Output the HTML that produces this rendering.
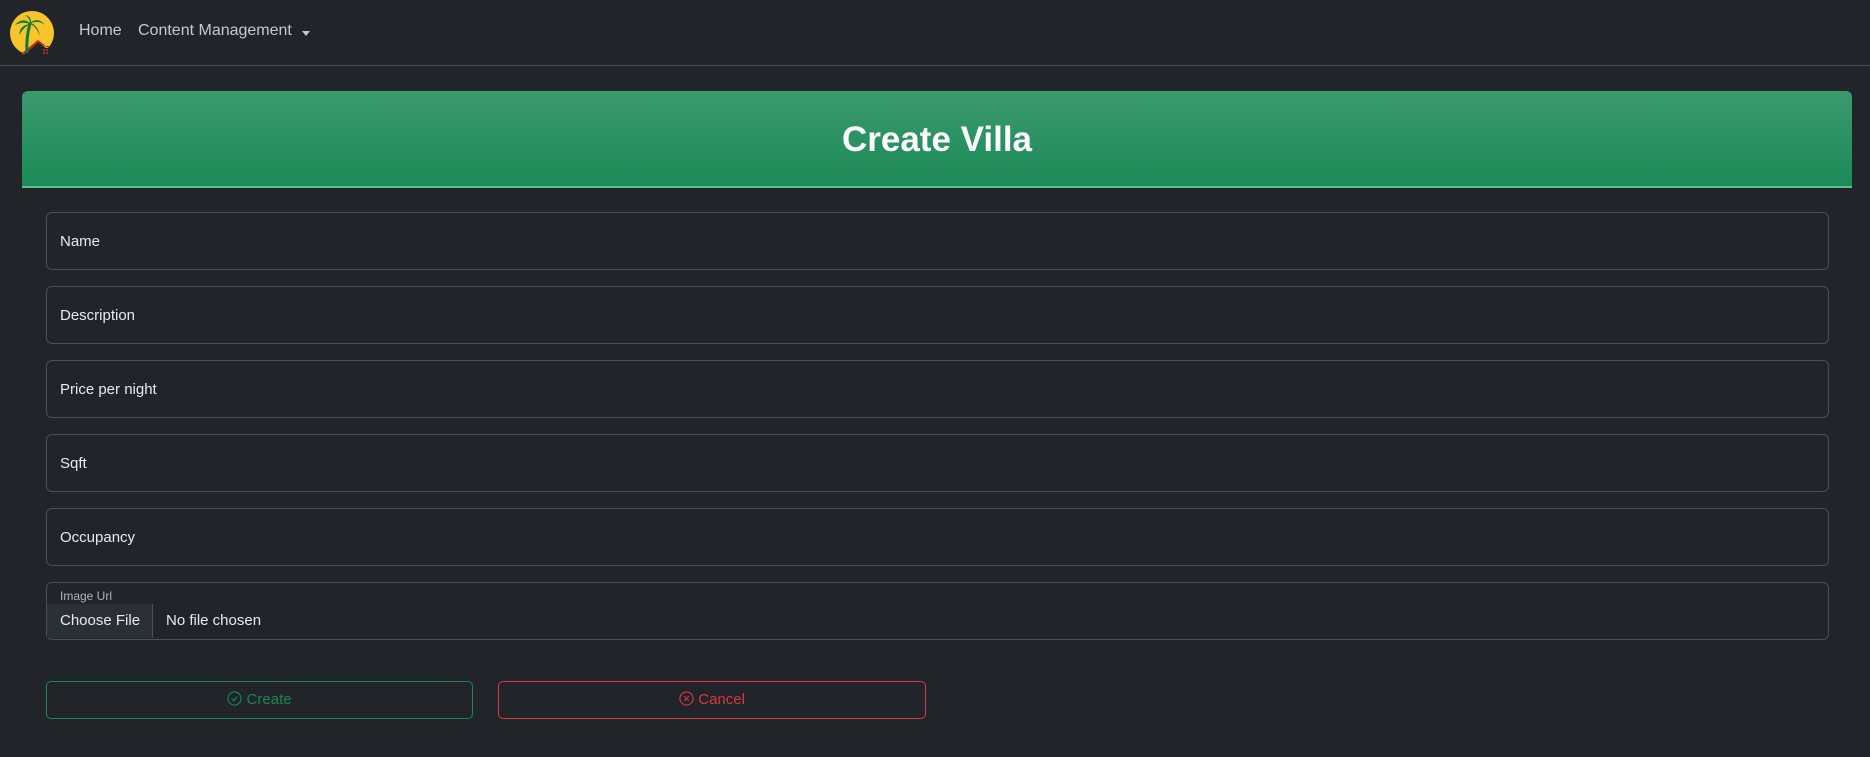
<!DOCTYPE html>
<html><head><meta charset="utf-8"><style>
*{box-sizing:border-box;margin:0;padding:0}
body{width:1870px;height:757px;background:#212529;font-family:"Liberation Sans",sans-serif;color:#dee2e6;position:relative;overflow:hidden}
.nav{position:absolute;left:0;top:0;width:1870px;height:66px;border-bottom:1px solid #495057}
.nav a{position:absolute;top:22px;font-size:16px;color:#c6c9cc}
.hdr{position:absolute;left:22px;top:91px;width:1830px;height:97px;border-radius:6px 6px 0 0;background:linear-gradient(#3a9a6d,#1d8a58);border-bottom:2px solid #5cc08e;text-align:center;color:#fff;font-weight:bold;font-size:35px;line-height:98px}
.inp{position:absolute;left:46px;width:1783px;height:58px;border:1px solid #495057;border-radius:6px;font-size:15px;color:#e8eaec;padding-left:13px;line-height:58px}
.btn{position:absolute;top:681px;height:38px;border-radius:5px;font-size:15px;line-height:36px;text-align:center}
</style></head><body>
<div class="nav">
<svg style="position:absolute;left:9px;top:10px" width="46" height="46" viewBox="0 0 46 46">
<circle cx="23" cy="23" r="22" fill="#f7c52b"/>
<path d="M10 46 L29 32 L37 38 L46 38 L46 46Z" fill="#212529"/>
<path d="M12 44 L29 30 L37 36 L40 36 L40 38 L29 33 L15 45Z" fill="#b22a1e"/>
<path d="M18 43 Q17 28 21 13" stroke="#0f7a33" stroke-width="3" fill="none"/>
<path d="M21 13 Q13 7 6 15 Q14 11 21 14 Q11 15 10 25 Q15 17 21 14 Q27 16 31 26 Q29 16 22 13 Q30 10 36 15 Q30 7 22 12 Q22 6 16 5 Q21 8 21 13Z" fill="#0f7a33"/>
<rect x="34" y="39" width="2" height="2" fill="#b22a1e"/><rect x="37" y="39" width="2" height="2" fill="#b22a1e"/><rect x="34" y="42" width="2" height="2" fill="#b22a1e"/><rect x="37" y="42" width="2" height="2" fill="#b22a1e"/>
</svg>
<a style="left:79px">Home</a>
<a style="left:138px">Content Management</a>
<span style="position:absolute;left:302px;top:31px;border-left:4px solid transparent;border-right:4px solid transparent;border-top:5px solid #c6c9cc"></span>
</div>
<div class="hdr">Create Villa</div>
<div class="inp" style="top:212px">Name</div>
<div class="inp" style="top:286px">Description</div>
<div class="inp" style="top:360px">Price per night</div>
<div class="inp" style="top:434px">Sqft</div>
<div class="inp" style="top:508px">Occupancy</div>
<div class="inp" style="top:582px;padding:0">
<div style="position:absolute;left:13px;top:6px;font-size:12px;line-height:14px;color:#adb5bd">Image Url</div>
<div style="position:absolute;left:0;top:21px;width:106px;height:34px;background:#2b3035;border-right:1px solid #495057;font-size:15px;line-height:34px;padding-left:13px">Choose File</div>
<div style="position:absolute;left:119px;top:21px;font-size:15px;line-height:34px">No file chosen</div>
</div>
<div class="btn" style="left:46px;width:427px;border:1px solid #198754;color:#198754">
<svg width="15" height="15" viewBox="0 0 16 16" style="vertical-align:-2px"><circle cx="8" cy="8" r="7" stroke="#198754" fill="none" stroke-width="1.2"/><path d="M5 8.2 L7.2 10.4 L11 5.8" stroke="#198754" fill="none" stroke-width="1.2"/></svg> Create</div>
<div class="btn" style="left:498px;width:428px;border:1px solid #dc3545;color:#dc3545">
<svg width="15" height="15" viewBox="0 0 16 16" style="vertical-align:-2px"><circle cx="8" cy="8" r="7" stroke="#dc3545" fill="none" stroke-width="1.2"/><path d="M5.5 5.5 L10.5 10.5 M10.5 5.5 L5.5 10.5" stroke="#dc3545" fill="none" stroke-width="1.2"/></svg> Cancel</div>
</body></html>
